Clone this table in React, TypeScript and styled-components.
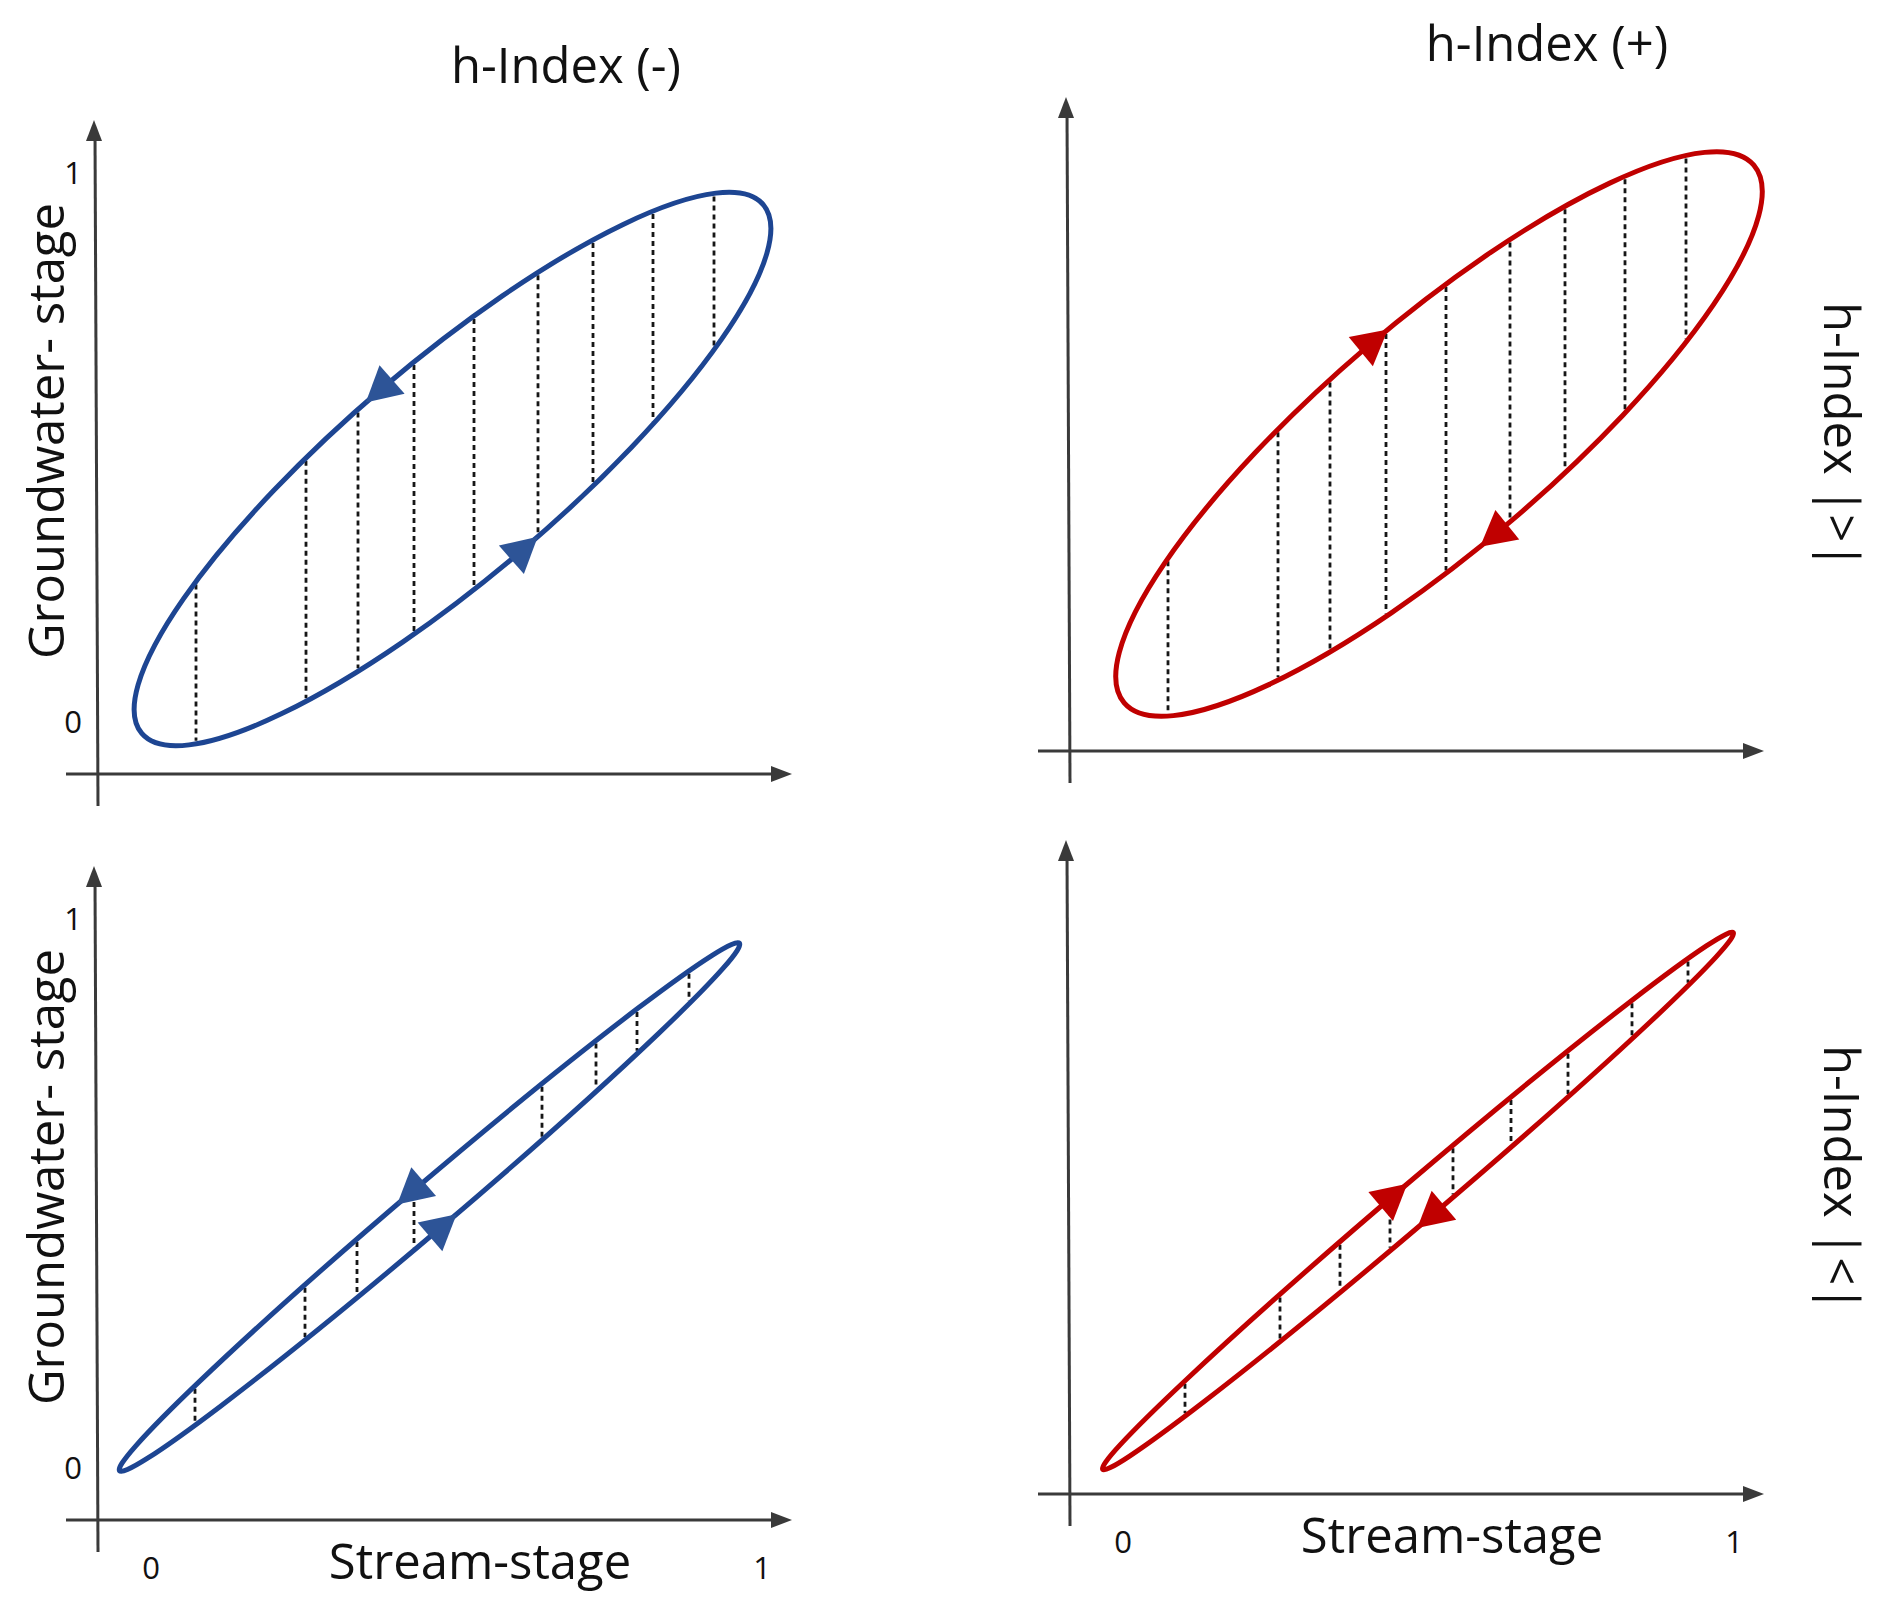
import React from 'react';
import styled, { createGlobalStyle } from 'styled-components';

const GlobalStyle = createGlobalStyle`
  html, body {
    margin: 0;
    padding: 0;
    background: #ffffff;
  }
  body {
    font-family: "Open Sans", "Liberation Sans", sans-serif;
    color: #111111;
  }
`;

const BLUE = '#1d4592';
const BLUE_HEAD = '#2d5497';
const RED = '#c00000';
const AXIS = '#3a3a3a';

const CHART_W = 760;
const CHART_H = 690;
// axis origin inside each chart svg
const OX = 40;
const OY = 660;

const Page = styled.main`
  width: 1892px;
  height: 1613px;
  display: flex;
  overflow: hidden;
  background: #ffffff;
`;

const Column = styled.section<{ $width: number; $offset: number }>`
  flex: 0 0 ${({ $width }) => $width}px;
  min-width: 0;
  margin-left: ${({ $offset }) => $offset}px;
  display: flex;
  flex-direction: column;
`;

// titles sit at different heights in the two columns
const Title = styled.h2<{ $height: number; $top: number; $indent: number }>`
  margin: 0;
  box-sizing: border-box;
  height: ${({ $height }) => $height}px;
  padding-top: ${({ $top }) => $top}px;
  padding-left: ${({ $indent }) => $indent}px;
  font-size: 49px;
  line-height: 49px;
  font-weight: 400;
  text-align: center;
  white-space: nowrap;
`;

const Stack = styled.div<{ $gap: number }>`
  display: flex;
  flex-direction: column;
  gap: ${({ $gap }) => $gap}px;
`;

const ChartRow = styled.div`
  display: flex;
  height: ${CHART_H}px;
`;

const LabelSlot = styled.div<{ $width: number; $padLeft: number; $padBottom: number }>`
  flex: 0 0 ${({ $width }) => $width}px;
  min-width: 0;
  box-sizing: border-box;
  display: flex;
  align-items: center;
  padding-left: ${({ $padLeft }) => $padLeft}px;
  padding-bottom: ${({ $padBottom }) => $padBottom}px;
`;

const AxisText = styled.span<{ $flip?: boolean }>`
  flex: none;
  writing-mode: vertical-rl;
  transform: ${({ $flip }) => ($flip ? 'rotate(180deg)' : 'none')};
  font-size: 49px;
  line-height: 49px;
  white-space: pre;
`;

const ChartSvg = styled.svg`
  display: block;
  flex: 0 0 ${CHART_W}px;
  overflow: visible;
`;

const Caption = styled.div<{ $indent: number }>`
  display: flex;
  align-items: baseline;
  margin-left: ${({ $indent }) => $indent}px;
  line-height: 20px;
`;

const CaptionCell = styled.span<{ $width: number; $size: number }>`
  flex: 0 0 ${({ $width }) => $width}px;
  text-align: center;
  font-size: ${({ $size }) => $size}px;
  white-space: nowrap;
`;

type Ellipse = { cx: number; cy: number; a: number; b: number; phi: number };
type ArrowSpec = { u: number; side: 1 | -1; dir: 1 | -1 };
type ChartSpec = {
  stroke: string;
  head: string;
  ellipse: Ellipse;
  dashes: number[];
  arrows: ArrowSpec[];
  ticks?: boolean;
};

const DEG = Math.PI / 180;

// vertical chord of the loop at x, in chart coords
function chord(e: Ellipse, x: number): [number, number] | null {
  const c = Math.cos(e.phi * DEG);
  const s = Math.sin(e.phi * DEG);
  const a2 = e.a * e.a;
  const b2 = e.b * e.b;
  const dx = x - e.cx;
  const A = (s * s) / a2 + (c * c) / b2;
  const B = 2 * dx * c * s * (1 / b2 - 1 / a2);
  const C = dx * dx * ((c * c) / a2 + (s * s) / b2) - 1;
  const disc = B * B - 4 * A * C;
  if (disc <= 0) return null;
  const r = Math.sqrt(disc);
  return [e.cy + (-B - r) / (2 * A), e.cy + (-B + r) / (2 * A)];
}

function arrowHead(e: Ellipse, spec: ArrowSpec, len = 35, width = 38): string {
  const c = Math.cos(e.phi * DEG);
  const s = Math.sin(e.phi * DEG);
  const u = spec.u;
  const v = spec.side * e.b * Math.sqrt(Math.max(0, 1 - (u / e.a) ** 2));
  const px = e.cx + u * c + v * s;
  const py = e.cy - u * s + v * c;
  let du = (-e.a * v) / e.b;
  let dv = (e.b * u) / e.a;
  if (du * spec.dir < 0) {
    du = -du;
    dv = -dv;
  }
  let tx = du * c + dv * s;
  let ty = -du * s + dv * c;
  const n = Math.hypot(tx, ty);
  tx /= n;
  ty /= n;
  const bx = px - len * tx;
  const by = py - len * ty;
  const nx = -ty * (width / 2);
  const ny = tx * (width / 2);
  return `${px},${py} ${bx + nx},${by + ny} ${bx - nx},${by - ny}`;
}

const Chart: React.FC<{ spec: ChartSpec }> = ({ spec }) => {
  const e = spec.ellipse;
  return (
    <ChartSvg width={CHART_W} height={CHART_H} viewBox={`0 0 ${CHART_W} ${CHART_H}`}>
      <g transform={`translate(${OX} ${OY})`}>
        {/* axes */}
        <line x1={-1} y1={-640} x2={2} y2={32} stroke={AXIS} strokeWidth={3} />
        <polygon points="-2,-654 -10,-633 6,-633" fill={AXIS} />
        <line x1={-30} y1={0} x2={680} y2={0} stroke={AXIS} strokeWidth={3} />
        <polygon points="696,0 675,-8 675,8" fill={AXIS} />

        {spec.ticks && (
          <g fontFamily='"Open Sans", "Liberation Sans", sans-serif' fontSize={31} fill="#111" textAnchor="middle">
            <text x={-23} y={-590}>1</text>
            <text x={-23} y={-41}>0</text>
          </g>
        )}

        {/* hatching inside the loop */}
        {spec.dashes.map((x) => {
          const ch = chord(e, x);
          if (!ch) return null;
          return (
            <line
              key={x}
              x1={x}
              y1={ch[0] + 3}
              x2={x}
              y2={ch[1] - 3}
              stroke="#161616"
              strokeWidth={2.8}
              strokeDasharray="5 4"
            />
          );
        })}

        <ellipse
          cx={e.cx}
          cy={e.cy}
          rx={e.a}
          ry={e.b}
          transform={`rotate(${-e.phi} ${e.cx} ${e.cy})`}
          fill="none"
          stroke={spec.stroke}
          strokeWidth={5}
        />

        {spec.arrows.map((a, i) => (
          <polygon key={i} points={arrowHead(e, a)} fill={spec.head} />
        ))}
      </g>
    </ChartSvg>
  );
};

const TOP_LEFT: ChartSpec = {
  stroke: BLUE,
  head: BLUE_HEAD,
  ellipse: { cx: 356.5, cy: -305, a: 408, b: 107, phi: 40.4 },
  dashes: [100, 210, 262, 318, 378, 442, 497, 557, 618],
  arrows: [
    { u: -23, side: -1, dir: -1 },
    { u: 21, side: 1, dir: 1 },
  ],
  ticks: true,
};

const TOP_RIGHT: ChartSpec = {
  stroke: RED,
  head: RED,
  ellipse: { cx: 371, cy: -317, a: 414, b: 113, phi: 40.5 },
  dashes: [100, 210, 262, 318, 378, 442, 497, 557, 618],
  arrows: [
    { u: 29, side: -1, dir: 1 },
    { u: -42, side: 1, dir: -1 },
  ],
};

const BOTTOM_LEFT: ChartSpec = {
  stroke: BLUE,
  head: BLUE_HEAD,
  ellipse: { cx: 333.5, cy: -313, a: 407, b: 23, phi: 40.4 },
  dashes: [99, 209, 261, 318, 446, 500, 541, 593],
  arrows: [
    { u: -23, side: -1, dir: -1 },
    { u: 16, side: 1, dir: 1 },
  ],
  ticks: true,
};

const BOTTOM_RIGHT: ChartSpec = {
  stroke: RED,
  head: RED,
  ellipse: { cx: 350, cy: -293, a: 414, b: 20, phi: 40.4 },
  dashes: [117, 212, 272, 322, 385, 443, 500, 564, 620],
  arrows: [
    { u: 3, side: -1, dir: 1 },
    { u: -18, side: 1, dir: -1 },
  ],
};

const StreamCaption: React.FC<{ indent: number }> = ({ indent }) => (
  <Caption $indent={indent}>
    <CaptionCell $width={190} $size={31}>0</CaptionCell>
    <CaptionCell $width={468} $size={49}>Stream-stage</CaptionCell>
    <CaptionCell $width={96} $size={31}>1</CaptionCell>
  </Caption>
);

export default function App() {
  return (
    <>
      <GlobalStyle />
      <Page>
        <Column $width={816} $offset={0}>
          <Title $height={114} $top={39.5} $indent={316}>h-Index (-)</Title>
          <Stack $gap={56}>
            <ChartRow>
              <LabelSlot $width={56} $padLeft={20.5} $padBottom={55}>
                <AxisText $flip>Groundwater- stage</AxisText>
              </LabelSlot>
              <Chart spec={TOP_LEFT} />
            </ChartRow>
            <ChartRow>
              <LabelSlot $width={56} $padLeft={20.5} $padBottom={55}>
                <AxisText $flip>Groundwater- stage</AxisText>
              </LabelSlot>
              <Chart spec={BOTTOM_LEFT} />
            </ChartRow>
          </Stack>
          <StreamCaption indent={56} />
        </Column>

        <Column $width={864} $offset={212}>
          <Title $height={91} $top={17.5} $indent={174}>h-Index (+)</Title>
          <Stack $gap={53}>
            <ChartRow>
              <Chart spec={TOP_RIGHT} />
              <LabelSlot $width={104} $padLeft={29.5} $padBottom={0}>
                <AxisText>h-Index |&gt;|</AxisText>
              </LabelSlot>
            </ChartRow>
            <ChartRow>
              <Chart spec={BOTTOM_RIGHT} />
              <LabelSlot $width={104} $padLeft={29.5} $padBottom={0}>
                <AxisText>h-Index |&lt;|</AxisText>
              </LabelSlot>
            </ChartRow>
          </Stack>
          <StreamCaption indent={0} />
        </Column>
      </Page>
    </>
  );
}
